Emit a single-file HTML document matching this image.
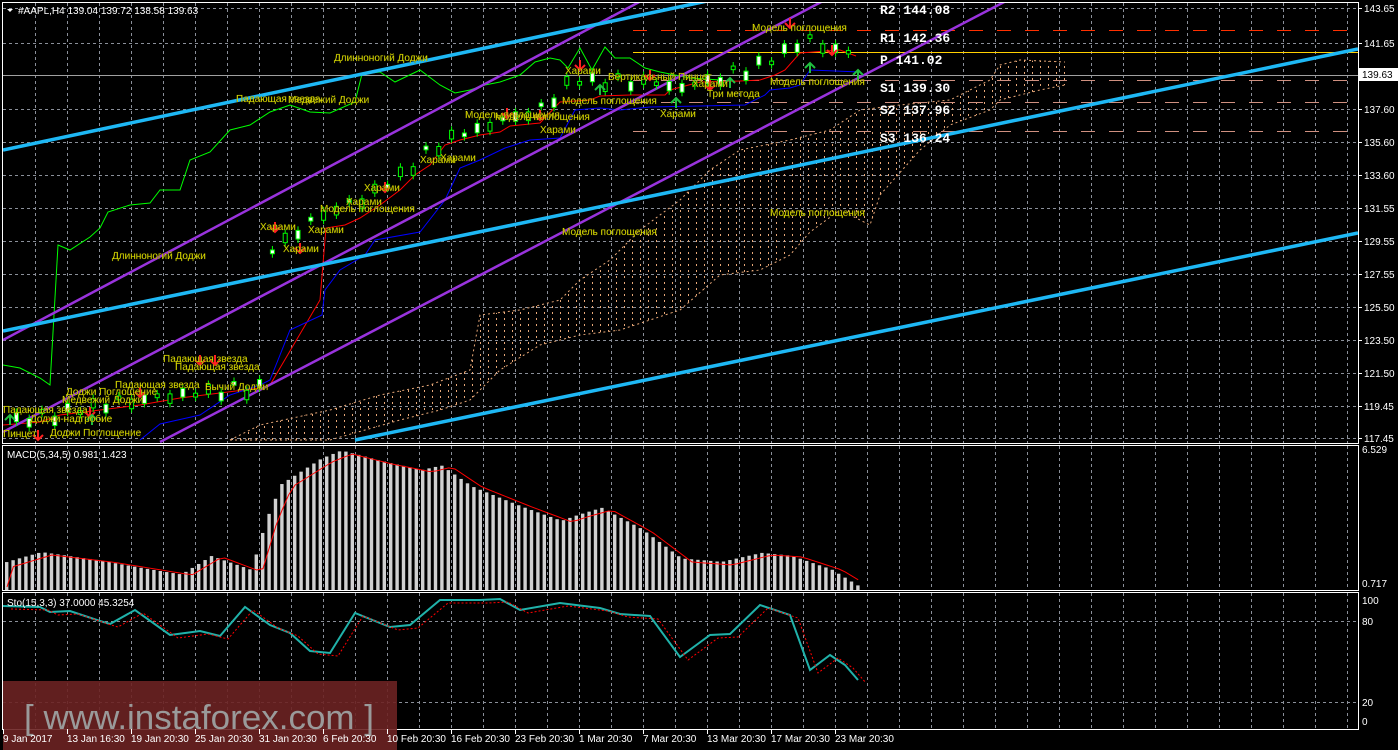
<!DOCTYPE html><html><head><meta charset="utf-8"><style>
html,body{margin:0;padding:0;background:#000;width:1398px;height:750px;overflow:hidden}
svg{display:block;font-family:"Liberation Sans",sans-serif}
.ax{fill:#fff;font-size:10px}
.lb{fill:#ffff00;font-size:10px;stroke:#666600;stroke-width:.3}
.pv{fill:#fff;font-size:13px;font-family:"Liberation Mono",monospace;font-weight:bold}
</style></head><body>
<svg id="s" width="1398" height="750" xmlns="http://www.w3.org/2000/svg">
<defs>
<clipPath id="cc"><polygon id="cp" points=""/></clipPath>
<clipPath id="main"><rect x="3" y="3" width="1355" height="440"/></clipPath>
</defs>
<g id="grid" stroke="#8a8f99" stroke-dasharray="3,3" stroke-width="1"></g>
<rect x="2.5" y="2.5" width="1356" height="441" fill="none" stroke="#fff"/>
<rect x="2.5" y="445.5" width="1356" height="145" fill="none" stroke="#fff"/>
<rect x="2.5" y="592.5" width="1356" height="137" fill="none" stroke="#fff"/>
<g clip-path="url(#main)">
<g id="cloud" clip-path="url(#cc)" stroke="#e8a878" stroke-dasharray="2,4" stroke-width="1"></g>
<polyline id="cu" fill="none" stroke="#e8a878" stroke-dasharray="2,3"/>
<polyline id="cl" fill="none" stroke="#e8a878" stroke-dasharray="2,3"/>
<line x1="633" y1="30.5" x2="1358" y2="30.5" stroke="#ff3000" stroke-dasharray="14,14"/>
<line x1="633" y1="52.5" x2="1358" y2="52.5" stroke="#ffd000"/>
<line x1="633" y1="80.5" x2="1358" y2="80.5" stroke="#d09080" stroke-dasharray="14,14"/>
<line x1="633" y1="102.5" x2="1358" y2="102.5" stroke="#d09080" stroke-dasharray="14,14"/>
<line x1="633" y1="131.5" x2="1358" y2="131.5" stroke="#d09080" stroke-dasharray="14,14"/>
<line x1="3" y1="75.5" x2="1358" y2="75.5" stroke="#a0a0a0"/>
<polyline fill="none" stroke="#00ff00" stroke-width="1" points="3,365 20,368 40,378 50,385 58,245 70,250 90,237 100,228 108,212 130,205 150,203 160,190 180,190 190,160 210,152 230,130 250,125 270,112 290,105 310,112 330,113 355,102 362,74 380,72 395,82 420,70 440,85 455,93 470,90 485,85 500,82 520,75 535,62 550,58 560,60 568,68 580,48 592,70 605,47 615,58 630,58 645,68 660,72 690,78 720,80"/>
<polyline fill="none" stroke="#ff0000" stroke-width="1" points="3,425 40,422 60,415 100,410 140,405 180,398 220,393 260,388 270,385 320,300 326,228 345,225 360,218 380,205 400,190 415,175 430,165 445,145 460,140 480,135 500,132 510,126 540,123 560,102 590,100 600,96 630,95 665,95 670,90 700,82 740,81 760,80 775,75 785,70 800,53 840,50 856,56"/>
<polyline fill="none" stroke="#0000ff" stroke-width="1" points="140,440 160,424 200,415 230,395 260,385 270,380 290,330 322,315 325,290 340,270 365,255 375,240 420,232 445,200 460,168 470,164 480,160 505,148 530,140 560,138 575,110 600,108 620,110 650,107 700,106 745,105 765,95 770,90 790,88 800,85 810,70 860,72"/>
<line x1="3" y1="340" x2="643" y2="0" stroke="#9933dd" stroke-width="2.5"/>
<line x1="3" y1="432" x2="825" y2="0" stroke="#9933dd" stroke-width="2.5"/>
<line x1="160" y1="442" x2="1008" y2="0" stroke="#9933dd" stroke-width="2.5"/>
<line x1="3" y1="150" x2="712" y2="0" stroke="#1eb8f5" stroke-width="3.5"/>
<line x1="3" y1="331" x2="1358" y2="49" stroke="#1eb8f5" stroke-width="3.5"/>
<line x1="355" y1="440" x2="1358" y2="233" stroke="#1eb8f5" stroke-width="3.5"/>
<g id="candles"></g>
<g id="arrows"></g>
</g>
<text class="pv" x="880" y="14">R2 144.08</text>
<text class="pv" x="880" y="42">R1 142.36</text>
<text class="pv" x="880" y="64">P 141.02</text>
<text class="pv" x="880" y="92">S1 139.30</text>
<text class="pv" x="880" y="114">S2 137.96</text>
<text class="pv" x="880" y="142">S3 136.24</text>
<g class="lb">
<text x="334" y="61">Длинноногий Доджи</text>
<text x="236" y="102">Падающая звезда</text>
<text x="288" y="103">Медвежий Доджи</text>
<text x="112" y="259">Длинноногий Доджи</text>
<text x="465" y="118">Модель поглощения</text>
<text x="495" y="120">Модель поглощения</text>
<text x="540" y="133">Харами</text>
<text x="562" y="104">Модель поглощения</text>
<text x="565" y="74">Харами</text>
<text x="608" y="80">Вертикальный Пинцет</text>
<text x="660" y="117">Харами</text>
<text x="692" y="87">Харами</text>
<text x="707" y="97">Три метода</text>
<text x="752" y="31">Модель поглощения</text>
<text x="770" y="85">Модель поглощения</text>
<text x="562" y="235">Модель поглощения</text>
<text x="770" y="216">Модель поглощения</text>
<text x="420" y="163">Харами</text>
<text x="440" y="161">Харами</text>
<text x="364" y="191">Харами</text>
<text x="346" y="205">Харами</text>
<text x="320" y="212">Модель поглощения</text>
<text x="260" y="230">Харами</text>
<text x="308" y="233">Харами</text>
<text x="283" y="252">Харами</text>
<text x="163" y="362">Падающая звезда</text>
<text x="175" y="370">Падающая звезда</text>
<text x="115" y="388">Падающая звезда</text>
<text x="205" y="390">Бычий Доджи</text>
<text x="66" y="395">Доджи Поглощение</text>
<text x="62" y="403">Медвежий Доджи</text>
<text x="3" y="413">Падающая звезда</text>
<text x="30" y="422">Доджи-надгробие</text>
<text x="50" y="436">Доджи Поглощение</text>
<text x="3" y="437">Пинцет</text>
</g>
<polygon points="7,9 13,9 10,12" fill="#fff"/>
<text class="ax" x="18" y="14">#AAPL,H4  139.04 139.72 138.58 139.63</text>
<g id="macd"></g>
<polyline id="msig" fill="none" stroke="#ff0000" stroke-width="1"/>
<text class="ax" x="7" y="458">MACD(5,34,5) 0.981 1.423</text>
<line x1="3" y1="621.5" x2="1358" y2="621.5" stroke="#8a8f99" stroke-dasharray="3,3"/>
<line x1="3" y1="702.5" x2="1358" y2="702.5" stroke="#8a8f99" stroke-dasharray="3,3"/>
<polyline id="sk" fill="none" stroke="#20b2aa" stroke-width="2"/>
<polyline id="sd" fill="none" stroke="#ff0000" stroke-width="1" stroke-dasharray="2,2"/>
<text class="ax" x="7" y="606">Sto(15,3,3) 37.0000 45.3254</text>
<g class="ax" id="rax"></g>
<rect x="1359" y="68" width="39" height="13" fill="#fff"/>
<text x="1362" y="78" font-size="10" fill="#000">139.63</text>
<g class="ax">
<text x="1362" y="453">6.529</text><text x="1362" y="587">0.717</text>
<text x="1362" y="604">100</text><text x="1362" y="625">80</text><text x="1362" y="706">20</text><text x="1362" y="725">0</text>
</g>
<rect x="3" y="681" width="394" height="69" fill="#6b2222" opacity="0.9"/>
<text x="24" y="729" font-size="34" fill="#9a9a9a" textLength="350" lengthAdjust="spacingAndGlyphs">[ www.instaforex.com ]</text>
<g class="ax" id="tax"></g>
</svg>
<script>
var N="http://www.w3.org/2000/svg";
function el(p,t,a){var e=document.createElementNS(N,t);for(var k in a)e.setAttribute(k,a[k]);p.appendChild(e);return e}
var g=document.getElementById('grid');
for(var x=35;x<1358;x+=32){el(g,'line',{x1:x+.5,y1:3,x2:x+.5,y2:443});el(g,'line',{x1:x+.5,y1:446,x2:x+.5,y2:590});el(g,'line',{x1:x+.5,y1:593,x2:x+.5,y2:729});}
var ys=[8,43,75,109,142,175,208,241,274,307,340,373,406,438],lab=["143.65","141.65","","137.60","135.60","133.60","131.55","129.55","127.55","125.50","123.50","121.50","119.45","117.45"];
var rax=document.getElementById('rax');
ys.forEach(function(y,i){if(i!=2)el(g,'line',{x1:3,y1:y+.5,x2:1358,y2:y+.5});el(rax,'line',{x1:1358,y1:y+.5,x2:1362,y2:y+.5,stroke:'#fff'});if(lab[i]){var t=el(rax,'text',{x:1364,y:y+4});t.textContent=lab[i];}});
function interp(pts,x){for(var i=0;i<pts.length-1;i++){if(x>=pts[i][0]&&x<=pts[i+1][0]){var f=(x-pts[i][0])/(pts[i+1][0]-pts[i][0]);return pts[i][1]+f*(pts[i+1][1]-pts[i][1]);}}return pts[pts.length-1][1]}
var up=[[230,440],[260,425],[330,410],[380,395],[430,385],[470,370],[480,315],[520,310],[560,300],[580,280],[610,260],[640,230],[680,200],[710,170],[740,150],[790,140],[830,130],[860,110],[900,105],[950,100],[990,80],[1000,65],[1020,60],[1065,62]];
var lo=[[230,440],[330,440],[400,420],[440,410],[470,400],[500,370],[540,345],[580,335],[620,330],[680,310],[720,275],[760,270],[790,255],[810,232],[840,210],[870,225],[880,195],[920,150],[950,125],[990,110],[1000,100],[1040,90],[1065,85]];
var s=function(a){return a.map(function(p){return p.join(',')}).join(' ')};
document.getElementById('cp').setAttribute('points',s(up)+' '+s(lo.slice().reverse()));
document.getElementById('cu').setAttribute('points',s(up));
document.getElementById('cl').setAttribute('points',s(lo));
var cl=document.getElementById('cloud');
for(var x=232;x<1065;x+=8)el(cl,'line',{x1:x+.5,y1:0,x2:x+.5,y2:443});
var cd=document.getElementById('candles');
var tl=[[3,420],[40,418],[100,405],[180,395],[260,388],[270,250],[320,215],[360,200],[400,175],[430,150],[450,138],[480,128],[510,118],[540,110],[570,80],[600,82],[640,82],[680,88],[740,72],[775,58],[800,40],[830,48],[856,58]];
var i=0;
for(var x=8;x<858;x+=6.4){i++;if(i%2)continue;var y=interp(tl,x)-4+Math.sin(x*1.7)*5;var h=3+Math.abs(Math.cos(x*.9))*7;var w=(Math.sin(x*3.1)>0);
el(cd,'line',{x1:x+2,y1:y-4,x2:x+2,y2:y+h+4,stroke:'#00ff00'});
el(cd,'rect',{x:x,y:y,width:4,height:h,fill:w?'#fff':'#000',stroke:'#00ff00','stroke-width':1});}
var ar=document.getElementById('arrows');
[[38,430],[90,407],[140,387],[200,355],[215,355],[275,222],[300,243],[385,182],[507,108],[540,110],[580,60],[650,70],[710,80],[790,18],[832,45]].forEach(function(p){el(ar,'path',{d:'M'+p[0]+','+p[1]+'v10M'+(p[0]-5)+','+(p[1]+5)+'l5,5l5,-5',stroke:'#ff2020','stroke-width':2,fill:'none'})});
[[10,425],[92,425],[600,95],[676,108],[730,88],[810,73],[858,80]].forEach(function(p){el(ar,'path',{d:'M'+p[0]+','+p[1]+'v-10M'+(p[0]-5)+','+(p[1]-5)+'l5,-5l5,5',stroke:'#20c040','stroke-width':2,fill:'none'})});
var mp=[[0,565],[40,553],[100,560],[180,573],[210,555],[250,570],[265,520],[280,485],[320,460],[340,452],[380,462],[420,470],[440,465],[470,485],[520,505],[560,520],[575,515],[600,508],[640,530],[680,560],[720,563],[760,553],[790,555],[830,568],[858,585]];
var mg=document.getElementById('macd');var sig=[];
for(var x=5;x<860;x+=6.4){var y=interp(mp,x)+Math.sin(x)*1.5;el(mg,'rect',{x:x,y:y,width:3.4,height:590-y,fill:'#d0d0d0'});sig.push([x+2,interp(mp,x-10)+2]);}
document.getElementById('msig').setAttribute('points',s(sig));
var sk=[[3,606],[40,607],[50,612],[70,611],[100,621],[110,624],[135,610],[170,635],[200,631],[220,636],[245,607],[270,625],[290,633],[310,651],[330,653],[355,613],[390,627],[410,625],[440,600],[480,600],[500,599],[520,610],[560,603],[600,608],[620,614],[650,616],[680,657],[710,635],[730,634],[760,605],[790,615],[810,670],[830,655],[845,665],[858,680]];
document.getElementById('sk').setAttribute('points',s(sk));
document.getElementById('sd').setAttribute('points',s(sk.map(function(p,i){return [p[0]+8,p[1]+3]})));
var tx=document.getElementById('tax');
["9 Jan 2017","13 Jan 16:30","19 Jan 20:30","25 Jan 20:30","31 Jan 20:30","6 Feb 20:30","10 Feb 20:30","16 Feb 20:30","23 Feb 20:30","1 Mar 20:30","7 Mar 20:30","13 Mar 20:30","17 Mar 20:30","23 Mar 20:30"].forEach(function(t,i){var x=3+i*64;el(tx,'line',{x1:x+.5,y1:729,x2:x+.5,y2:734,stroke:'#fff'});var e=el(tx,'text',{x:x,y:742});e.textContent=t;});
</script>
</body></html>
